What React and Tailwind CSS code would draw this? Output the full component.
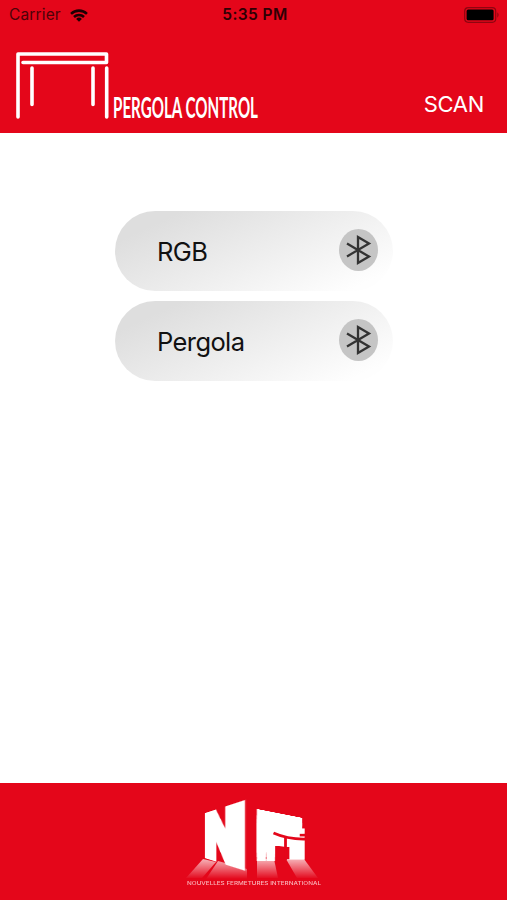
const devices = [
    { id: 1, name: 'RGB' },
    { id: 2, name: 'Pergola' }
]

function StatusBar() {
    return (
        <div className="flex h-[30px] items-center justify-between pl-[9px] pr-[7px] text-black">
            <div className="flex w-[180px] items-center gap-2">
                <span className="text-[15.5px] leading-5 tracking-[0.15px] text-[#4d0208]">Carrier</span>
                <svg className="h-[13px] w-5" viewBox="0 0 20 14" fill="none" stroke="#1c0003" strokeWidth="2.7">
                    <path d="M1.4 5.3A12.2 12.2 0 0 1 18.6 5.3" />
                    <path d="M4.6 8.6A7.7 7.7 0 0 1 15.4 8.6" />
                    <path d="M10 13.8L6.9 10.7A4.4 4.4 0 0 1 13.1 10.7Z" fill="#1c0003" stroke="none" />
                </svg>
            </div>
            <span className="pl-px text-[15.5px] font-semibold leading-5 tracking-[0.4px] text-[#2e0004]">5:35 PM</span>
            <div className="flex w-[180px] justify-end">
                <svg className="h-4 w-9" viewBox="0 0 36 16">
                    <rect x="0.7" y="0.7" width="31" height="14.6" rx="3.5" fill="none" stroke="#8f0510" strokeWidth="1.2" />
                    <rect x="2.6" y="2.6" width="27" height="10.6" rx="1.5" fill="#000" />
                    <path d="M33.3 5.3Q36 8 33.3 10.7Z" fill="#8f0510" />
                </svg>
            </div>
        </div>
    )
}

function Header() {
    return (
        <header className="h-[133px] bg-[#e4061a]">
            <StatusBar />
            <div className="flex justify-between pl-[15px] pr-[23px] pt-[20px]">
                <svg className="h-[80px] w-[250px] overflow-visible" viewBox="0 0 250 80">
                    <g fill="none" stroke="#fff" strokeWidth="3.6" strokeLinecap="round" strokeLinejoin="round">
                        <path d="M3 67V4H91.5V12.5H8" />
                        <path d="M17 18V54.5M78 18V54.5M91.7 18V67" />
                    </g>
                    <text x="98" y="68" textLength="145" lengthAdjust="spacingAndGlyphs" fill="#fff" fontFamily="Lato, sans-serif" fontWeight="700" fontSize="28">PERGOLA CONTROL</text>
                </svg>
                <button className="mt-[38px] h-8 text-[22px] leading-8 tracking-[-0.3px] text-white">SCAN</button>
            </div>
        </header>
    )
}

function Device({ name }) {
    return (
        <li className="flex h-[80px] w-[278px] items-center justify-between rounded-full bg-linear-[155deg] from-[#dedede] from-15% via-[#efefef] via-55% to-[#fefefe] to-90% pl-[42px] pr-[15px]">
            <span className="pt-[2px] text-[25.5px] leading-8 tracking-[-0.6px] text-[#111]">{name}</span>
            <span className="flex h-[42px] w-[39px] -translate-y-px items-center justify-center rounded-[50%] bg-[#c5c5c5]">
                <svg className="h-[32px] w-[26px]" viewBox="0 0 26 32" fill="none" stroke="#333" strokeWidth="2.3">
                    <path d="M1 9.6L23 22.6L12 29V3L23 9.4L1 22.4" />
                </svg>
            </span>
        </li>
    )
}

function Logo() {
    return (
        <div className="relative mx-auto h-[90px] w-[140px] text-white">
            {/* light beams on the floor */}
            <svg className="absolute inset-0 h-[90px] w-[140px]" viewBox="0 0 140 90">
                <defs>
                    <linearGradient id="beam" x1="0" y1="58" x2="0" y2="81" gradientUnits="userSpaceOnUse">
                        <stop offset="0" stopColor="#fff" stopOpacity="0.8" />
                        <stop offset="1" stopColor="#fff" stopOpacity="0" />
                    </linearGradient>
                </defs>
                <g fill="url(#beam)">
                    <path d="M19 61L32 64L18 80H2Z" />
                    <path d="M34 63L63 71V81H22Z" />
                    <path d="M73 61H90L94 80H73Z" />
                    <path d="M102 61H120L134 80H113Z" />
                </g>
            </svg>
            <div className="absolute inset-0 flex items-start">
                <span className="ml-[8px] mt-[10px] w-[57px] text-center text-[67px] font-black leading-[56px] [-webkit-text-stroke:6px_#fff] [transform:perspective(77px)_rotateY(-42deg)]">N</span>
                <span className="ml-[4px] mt-[20px] w-[24px] origin-[0_43px] text-[40px] font-normal leading-[40px] [-webkit-text-stroke:4px_#fff] [text-shadow:2px_3px_#fff,-2px_3px_#fff,2px_6px_#fff,-2px_6px_#fff,2px_9px_#fff,-2px_9px_#fff] [transform:perspective(155px)_rotateY(30deg)_scale(3,1.32)]">F</span>
                <span className="ml-[7px] mt-[27px] w-[11px] origin-[0_37px] font-['Liberation_Sans'] text-[41px] font-bold leading-[41px] [-webkit-text-stroke:1px_#fff] [transform:scaleX(2.3)]">i</span>
            </div>
            {/* gaps between the F and the i */}
            <svg className="absolute inset-0 h-[90px] w-[140px]" viewBox="0 0 140 90" fill="none" stroke="#e4061a" strokeWidth="2.8">
                <path d="M89.5 35Q104 41.5 122 41" />
                <path d="M101.5 40V62" />
            </svg>
            <svg className="absolute inset-0 h-[90px] w-[140px]" viewBox="0 0 140 90">
                <text x="3" y="86.5" textLength="134" lengthAdjust="spacingAndGlyphs" fill="#f9b5ba" fontSize="5" fontWeight="500">NOUVELLES FERMETURES INTERNATIONAL</text>
            </svg>
        </div>
    )
}

export default function App() {
    return (
        <div className="flex h-[900px] w-[507px] flex-col overflow-hidden bg-white font-['Inter',sans-serif]">
            <Header />
            <main className="flex-1 pl-[115px] pt-[78px]">
                <ul className="flex flex-col gap-[10px]">
                    {devices.map((device) => (
                        <Device key={device.id} name={device.name} />
                    ))}
                </ul>
            </main>
            <footer className="h-[117px] bg-[#e4061a] pt-[15px]">
                <Logo />
            </footer>
        </div>
    )
}
